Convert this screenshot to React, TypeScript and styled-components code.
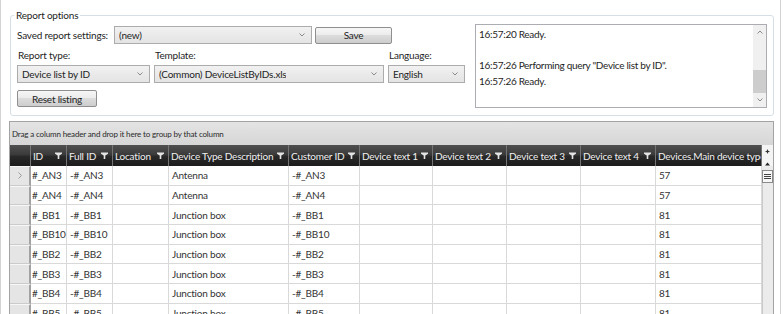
import styled, { createGlobalStyle } from "styled-components";

const GlobalStyle = createGlobalStyle`
  html, body {
    margin: 0;
    padding: 0;
    background: #fff;
  }
  body {
    font-family: Lato, "Liberation Sans", sans-serif;
    font-size: 10px;
    letter-spacing: -0.2px;
    color: #1e1e1e;
  }
`;

const columns = [
  { title: "ID", width: 36 },
  { title: "Full ID", width: 46 },
  { title: "Location", width: 56 },
  { title: "Device Type Description", width: 120 },
  { title: "Customer ID", width: 71 },
  { title: "Device text 1", width: 73 },
  { title: "Device text 2", width: 74 },
  { title: "Device text 3", width: 74 },
  { title: "Device text 4", width: 75 },
  { title: "Devices.Main device type", width: 106 },
];

const rows = [
  { id: "#_AN3", type: "Antenna", main: "57" },
  { id: "#_AN4", type: "Antenna", main: "57" },
  { id: "#_BB1", type: "Junction box", main: "81" },
  { id: "#_BB10", type: "Junction box", main: "81" },
  { id: "#_BB2", type: "Junction box", main: "81" },
  { id: "#_BB3", type: "Junction box", main: "81" },
  { id: "#_BB4", type: "Junction box", main: "81" },
  { id: "#_BB5", type: "Junction box", main: "81" },
];

const logLines = [
  "16:57:20 Ready.",
  "",
  '16:57:26 Performing query "Device list by ID".',
  "16:57:26 Ready.",
];

function Chevron({ up = false }: { up?: boolean }) {
  return (
    <svg width="6" height="4" viewBox="0 0 6 4">
      <polyline
        points={up ? "0.5,3.5 3,1 5.5,3.5" : "0.5,0.5 3,3 5.5,0.5"}
        fill="none"
        stroke="#8a8a8a"
        strokeWidth="1"
      />
    </svg>
  );
}

function FilterIcon() {
  return (
    <svg width="7" height="7" viewBox="0 0 7 7">
      <path d="M0 0.5 H7 V1.8 L4.3 3.4 V7 H2.7 V3.4 L0 1.8 Z" fill="#e4e4e4" />
    </svg>
  );
}

function Combo({ value, width }: { value: string; width: number }) {
  return (
    <ComboBox $width={width}>
      <span>{value}</span>
      <Chevron />
    </ComboBox>
  );
}

export default function App() {
  return (
    <Page>
      <GlobalStyle />
      <Options>
        <Legend>Report options</Legend>
        <Controls>
          <SavedRow>
            <SavedLabel>Saved report settings:</SavedLabel>
            <Combo value="(new)" width={198} />
            <Button $width={77}>Save</Button>
          </SavedRow>
          <Selectors>
            <FieldLabel>Report type:</FieldLabel>
            <FieldLabel>Template:</FieldLabel>
            <FieldLabel>Language:</FieldLabel>
            <Combo value="Device list by ID" width={133} />
            <Combo value="(Common) DeviceListByIDs.xls" width={230} />
            <Combo value="English" width={77} />
          </Selectors>
          <ResetRow>
            <Button $width={80}>Reset listing</Button>
          </ResetRow>
        </Controls>
        <LogBox>
          <LogLines>
            {logLines.map((line, i) => (
              <div key={i}>{line || "\u00a0"}</div>
            ))}
          </LogLines>
          <LogScroll>
            <ArrowButton>
              <Chevron up />
            </ArrowButton>
            <LogTrack>
              <LogThumb />
            </LogTrack>
            <ArrowButton>
              <Chevron />
            </ArrowButton>
          </LogScroll>
        </LogBox>
      </Options>

      <GridFrame>
        <GroupPanel>Drag a column header and drop it here to group by that column</GroupPanel>
        <GridBody>
          <Table $columns={columns.map((c) => c.width)}>
            <HeaderIndicator />
            {columns.map((c) => (
              <HeaderCell key={c.title}>
                <HeaderTitle>{c.title}</HeaderTitle>
                <FilterIcon />
              </HeaderCell>
            ))}
            {rows.map((r, i) => {
              const values = [r.id, "-" + r.id, "", r.type, "-" + r.id, "", "", "", "", r.main];
              return [
                <Indicator key={r.id + "-ind"}>
                  {i === 0 && (
                    <svg width="4" height="7" viewBox="0 0 4 7">
                      <polyline points="0.5,0.5 3.5,3.5 0.5,6.5" fill="none" stroke="#9a9a9a" strokeWidth="1" />
                    </svg>
                  )}
                </Indicator>,
                ...values.map((v, j) => (
                  <Cell key={r.id + "-" + j} $tight={j === 0}>
                    {v}
                  </Cell>
                )),
              ];
            })}
          </Table>
          <GridScroll>
            <ScrollTop>
              <svg width="5" height="5" viewBox="0 0 5 5">
                <path d="M2.5 0 L3.2 1.8 L5 2.5 L3.2 3.2 L2.5 5 L1.8 3.2 L0 2.5 L1.8 1.8 Z" fill="#333" />
              </svg>
              <svg width="5" height="4" viewBox="0 0 5 4">
                <path d="M0 3.5 L2.5 0.5 L5 3.5 Z" fill="#222" />
              </svg>
            </ScrollTop>
            <GridThumb>
              <svg width="7" height="5" viewBox="0 0 7 5">
                <path d="M0 0.5 H7 M0 2.5 H7 M0 4.5 H7" stroke="#444" strokeWidth="1" />
              </svg>
            </GridThumb>
            <GridTrack />
          </GridScroll>
        </GridBody>
      </GridFrame>
    </Page>
  );
}

const Page = styled.div`
  box-sizing: border-box;
  width: 781px;
  height: 314px;
  border-left: 1px solid #d3d3d3;
  border-right: 1px solid #d3d3d3;
  overflow: hidden;
  display: flex;
  flex-direction: column;
`;

const Options = styled.fieldset`
  box-sizing: border-box;
  width: 764px;
  margin: 9px 0 0 9px;
  padding: 3px 6px 7px 6px;
  border: 1px solid #d5dfe5;
  border-radius: 3px;
  display: flex;
  gap: 9px;
  min-width: 0;
`;

const Legend = styled.legend`
  margin-left: -3px;
  padding: 0 2px;
  line-height: 12px;
`;

const Controls = styled.div`
  width: 449px;
  display: flex;
  flex-direction: column;
`;

const SavedRow = styled.div`
  margin-top: 2px;
  display: flex;
  align-items: center;
  gap: 3px;
`;

const SavedLabel = styled.span`
  width: 94px;
  white-space: nowrap;
`;

const Selectors = styled.div`
  margin-top: 4px;
  display: grid;
  grid-template-columns: 133px 230px 77px;
  column-gap: 4px;
  row-gap: 3px;
`;

const FieldLabel = styled.span`
  padding-left: 1px;
  line-height: 14px;
`;

const ResetRow = styled.div`
  margin-top: 7px;
  display: flex;
`;

const ComboBox = styled.div<{ $width: number }>`
  box-sizing: border-box;
  width: ${({ $width }) => $width}px;
  height: 18px;
  padding: 0 6px 0 4px;
  border: 1px solid #acacac;
  background: linear-gradient(#f1f1f1, #e4e4e4);
  display: flex;
  align-items: center;
  justify-content: space-between;

  span {
    white-space: nowrap;
    overflow: hidden;
  }
`;

const Button = styled.div<{ $width: number }>`
  box-sizing: border-box;
  width: ${({ $width }) => $width}px;
  height: 17px;
  border: 1px solid #8f8f8f;
  border-radius: 2px;
  background: linear-gradient(#f6f6f6 0%, #ececec 45%, #dcdcdc 50%, #cdcdcd 100%);
  display: flex;
  align-items: center;
  justify-content: center;
`;

const LogBox = styled.div`
  box-sizing: border-box;
  width: 292px;
  height: 84px;
  border: 1px solid #abadb3;
  display: flex;
`;

const LogLines = styled.div`
  flex: 1;
  padding: 2px 3px;
  line-height: 15.6px;
  letter-spacing: -0.3px;
  white-space: nowrap;
  overflow: hidden;
`;

const LogScroll = styled.div`
  width: 13px;
  background: #f0f0f0;
  display: flex;
  flex-direction: column;
`;

const ArrowButton = styled.div`
  height: 14px;
  display: flex;
  align-items: center;
  justify-content: center;
`;

const LogTrack = styled.div`
  flex: 1;
  display: flex;
  flex-direction: column;
  justify-content: flex-end;
`;

const LogThumb = styled.div`
  height: 23px;
  background: #cdcdcd;
`;

const GridFrame = styled.div`
  box-sizing: border-box;
  width: 765px;
  margin: 5px 0 0 8px;
  flex: 1;
  border: 1px solid #a3a3a3;
  border-bottom: none;
  display: flex;
  flex-direction: column;
  overflow: hidden;
`;

const GroupPanel = styled.div`
  height: 23px;
  flex-shrink: 0;
  padding-left: 2px;
  font-size: 8px;
  letter-spacing: -0.15px;
  color: #2a2a2a;
  background: linear-gradient(#e4e4e4, #d6d6d6);
  display: flex;
  align-items: center;
`;

const GridBody = styled.div`
  flex: 1;
  display: flex;
  min-height: 0;
`;

const Table = styled.div<{ $columns: number[] }>`
  width: 752px;
  display: grid;
  grid-template-columns: 21px ${({ $columns }) => $columns.map((w) => w + "px").join(" ")};
  grid-template-rows: 21px;
  grid-auto-rows: 19.67px;
  align-content: start;
`;

const headerBg = "linear-gradient(#505050 0%, #3b3b3b 45%, #282828 55%, #1c1c1c 100%)";

const HeaderIndicator = styled.div`
  background: ${headerBg};
  border-right: 1px solid #777;
`;

const HeaderCell = styled.div`
  box-sizing: border-box;
  padding: 0 4px 0 2px;
  background: ${headerBg};
  border-right: 1px solid #747474;
  color: #f0f0f0;
  display: flex;
  align-items: center;
  justify-content: space-between;
  gap: 2px;
  overflow: hidden;

  svg {
    flex-shrink: 0;
  }
`;

const HeaderTitle = styled.span`
  white-space: nowrap;
`;

const Indicator = styled.div`
  box-sizing: border-box;
  background: #e5e5e5;
  border-top: 1px solid #f7f7f7;
  border-bottom: 1px solid #cbcbcb;
  border-right: 2px solid #a2a2a2;
  padding-left: 8px;
  display: flex;
  align-items: center;
`;

const Cell = styled.div<{ $tight?: boolean }>`
  box-sizing: border-box;
  padding: 0 ${({ $tight }) => ($tight ? "0 0 1px" : "3px")};
  border-right: 1px solid #d9d9d9;
  border-bottom: 1px solid #d9d9d9;
  color: #333;
  white-space: nowrap;
  overflow: hidden;
  display: flex;
  align-items: center;
`;

const GridScroll = styled.div`
  width: 11px;
  display: flex;
  flex-direction: column;
  background: #ebebeb;
`;

const ScrollTop = styled.div`
  height: 21px;
  background: #f4f4f4;
  display: flex;
  flex-direction: column;
  align-items: center;
  justify-content: space-between;
  padding: 4px 0 0;
  box-sizing: border-box;
`;

const GridThumb = styled.div`
  box-sizing: border-box;
  height: 13px;
  margin-top: 4px;
  border: 1px solid #8a8a8a;
  background: #f7f7f7;
  display: flex;
  align-items: center;
  justify-content: center;
`;

const GridTrack = styled.div`
  flex: 1;
  border-left: 1px solid #c9c9c9;
`;
